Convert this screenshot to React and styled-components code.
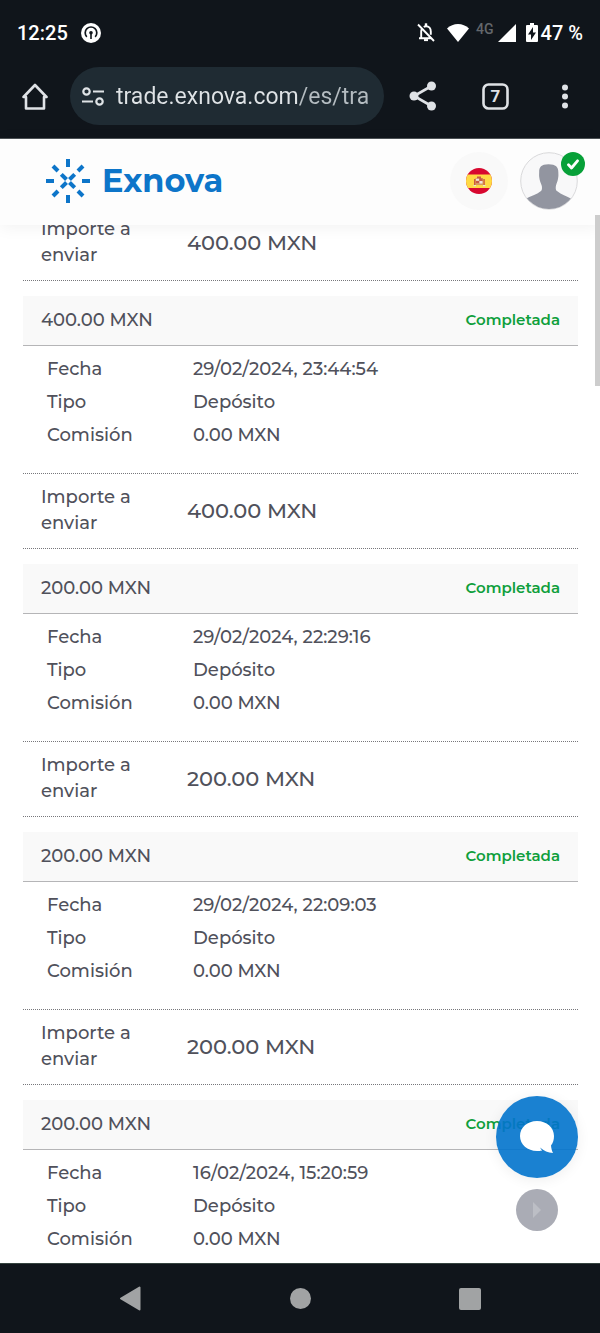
import React from "react";
import styled, { createGlobalStyle } from "styled-components";

const GlobalStyle = createGlobalStyle`
  *, *::before, *::after {
    box-sizing: border-box;
  }

  body {
    margin: 0;
    background: #fff;
    color: #50515b;
    font-family: Montserrat, Inter, "Liberation Sans", sans-serif;
  }

  button {
    padding: 0;
    border: none;
    background: none;
    cursor: pointer;
  }

  svg {
    display: block;
  }
`;

const Screen = styled.div`
  display: flex;
  flex-direction: column;
  height: 100vh;
  overflow: hidden;
`;

/* Phone status bar */

const StatusBar = styled.div`
  display: flex;
  flex: none;
  align-items: center;
  height: 67px;
  padding: 0 17px 2px;
  background: #10151b;
  color: #fff;
  font: 500 20px/24px Roboto, sans-serif;
`;

const StatusIcons = styled.div`
  display: flex;
  align-items: center;
  margin-left: auto;
`;

const StatusGap = styled.span`
  width: ${props => props.size || 12}px;
`;

const Network = styled.span`
  align-self: flex-start;
  color: #63676c;
  font-size: 14px;
  line-height: 16px;
  margin: 0 4px 0 7px;
`;

/* Browser toolbar */

const Toolbar = styled.div`
  display: flex;
  flex: none;
  align-items: center;
  height: 72px;
  padding-bottom: 13px;
  background: #10151b;
  border-bottom: 1px solid #4d5256;
`;

const ToolButton = styled.button`
  display: flex;
  flex: none;
  align-items: center;
  justify-content: center;
  width: ${props => props.$width}px;
  height: 58px;
  color: #dfe2e6;
`;

const AddressBar = styled.label`
  display: flex;
  flex: 1;
  align-items: center;
  gap: 12px;
  min-width: 0;
  height: 58px;
  padding: 0 10px 0 12px;
  border-radius: 29px;
  background: #1f2b33;
`;

const Address = styled.input`
  flex: 1;
  min-width: 0;
  padding: 2px 0 0;
  border: none;
  outline: none;
  background: linear-gradient(90deg, #dfe3e6 182px, #b4bcc1 182px);
  background-clip: text;
  -webkit-text-fill-color: transparent;
  font: 400 23px/32px Roboto, sans-serif;
`;

/* Site header */

const Header = styled.header`
  position: relative;
  z-index: 2;
  display: flex;
  flex: none;
  align-items: center;
  height: 86px;
  padding: 0 22px 2px 46px;
  background: #fdfdfd;
  box-shadow: 0 2px 16px rgba(0, 0, 0, 0.06);
`;

const Brand = styled.a`
  display: flex;
  align-items: center;
  gap: 12px;
  color: #0d75c9;
  font: 700 32px/40px Montserrat, "DejaVu Sans", sans-serif;
  text-decoration: none;
`;

const LanguageButton = styled.button`
  display: flex;
  align-items: center;
  justify-content: center;
  width: 58px;
  height: 58px;
  margin-left: auto;
  border-radius: 50%;
  background: #f9f9f9;
`;

const ProfileButton = styled.button`
  position: relative;
  width: 58px;
  height: 58px;
  margin-left: 12px;
`;

const Verified = styled.span`
  position: absolute;
  top: 0;
  right: -7px;
  display: flex;
  align-items: center;
  justify-content: center;
  width: 24px;
  height: 24px;
  border-radius: 50%;
  background: #07a038;
`;

/* Transactions */

const Main = styled.main`
  position: relative;
  flex: 1;
  min-height: 0;
  padding: 0 22px 0 23px;
  overflow: hidden;
`;

const ScrollThumb = styled.div`
  position: absolute;
  z-index: 3;
  top: 76px;
  right: 0;
  width: 5px;
  height: 171px;
  background: #cdcdcd;
`;

const Page = styled.div`
  position: relative;
  display: flex;
  flex: 1;
  flex-direction: column;
  min-height: 0;
`;

const Card = styled.article`
  margin-bottom: 15px;
`;

const CardHead = styled.div`
  display: flex;
  align-items: center;
  justify-content: space-between;
  height: 50px;
  padding: 0 18px 2px;
  border-bottom: 1px solid #b5b5b7;
  background: #f9f9f9;
  font-size: 18px;
  font-weight: 500;
`;

const Status = styled.span`
  color: #0f9f3c;
  font-size: 15px;
  font-weight: 600;
`;

const Details = styled.dl`
  display: grid;
  grid-template-columns: 146px 1fr;
  grid-auto-rows: 33px;
  align-items: center;
  height: 128px;
  margin: 0;
  padding: 6px 24px 0;
  border-bottom: 1px dotted #77777b;
  font-size: 18px;
  font-weight: 500;

  dd {
    margin: 0;
  }
`;

const Total = styled.div`
  display: grid;
  grid-template-columns: 146px 1fr;
  align-items: center;
  height: 75px;
  margin-top: ${props => (props.$scrolled ? "-19px" : 0)};
  padding: 0 18px 2px;
  border-bottom: 1px dotted #77777b;
`;

const TotalLabel = styled.span`
  width: 100px;
  font-size: 18px;
  font-weight: 500;
  line-height: 26px;
`;

const TotalAmount = styled.span`
  font-size: 21px;
  font-weight: 500;
`;

/* Floating buttons */

const FloatingButtons = styled.div`
  position: absolute;
  z-index: 4;
  right: 22px;
  bottom: 32px;
  display: flex;
  flex-direction: column;
  align-items: center;
  gap: 11px;
`;

const ChatButton = styled.button`
  display: flex;
  align-items: center;
  justify-content: center;
  width: 82px;
  height: 82px;
  border-radius: 50%;
  background: rgba(3, 117, 204, 0.91);
  box-shadow: 0 2px 14px rgba(0, 0, 0, 0.07);
`;

const NextButton = styled.button`
  display: flex;
  align-items: center;
  justify-content: center;
  width: 42px;
  height: 42px;
  border-radius: 50%;
  background: #aaacb5;
`;

/* System navigation */

const SystemNav = styled.nav`
  display: flex;
  flex: none;
  align-items: center;
  justify-content: center;
  height: 70px;
  border-top: 1px solid #35433f;
  background: #10151b;
`;

const SystemButton = styled.button`
  display: flex;
  align-items: center;
  justify-content: center;
  width: 170px;
  height: 68px;
`;

const transactions = [
  { amount: "400.00 MXN", date: "29/02/2024, 23:44:54", total: "400.00 MXN" },
  { amount: "200.00 MXN", date: "29/02/2024, 22:29:16", total: "200.00 MXN" },
  { amount: "200.00 MXN", date: "29/02/2024, 22:09:03", total: "200.00 MXN" },
  { amount: "200.00 MXN", date: "16/02/2024, 15:20:59" },
];

function PodcastIcon() {
  return (
    <svg width="20" height="20" viewBox="0 0 20 20" fill="none">
      <circle cx="10" cy="10" r="10" fill="#fff" />
      <path d="M5.800 13.800A5.800 5.800 0 1 1 14.200 13.800" stroke="#10151b" strokeWidth="1.700" />
      <circle cx="10" cy="9.800" r="1.800" fill="#10151b" />
      <path d="M10 10v6" stroke="#10151b" strokeWidth="1.600" />
    </svg>
  );
}

function MutedBellIcon() {
  return (
    <svg width="18" height="19" viewBox="0 0 18 19" fill="none" stroke="#fff" strokeWidth="1.900">
      <path d="M1 1.500L17 18M2 15.200h12.500M4.200 15V8.500c0-1 .3-2 .8-2.800M6.800 3.900C7.500 3.400 8.200 3.200 9 3.200c3 0 4.800 2.300 4.800 5.200v3.400" />
      <path d="M9 .3v2.800" strokeWidth="2.400" />
      <path d="M7 17.100h4" strokeWidth="2" />
    </svg>
  );
}

function ProfileIcon() {
  return (
    <svg width="58" height="58" viewBox="0 0 59 59">
      <defs>
        <clipPath id="avatar">
          <circle cx="29.500" cy="29.500" r="28.500" />
        </clipPath>
      </defs>
      <circle cx="29.500" cy="29.500" r="28.800" fill="#f8f8f9" stroke="#d8d8da" />
      <path
        clipPath="url(#avatar)"
        fill="#9295a0"
        d="M29 12.500c7.500 0 10 3 10 8 0 2 .3 3-.2 6-.3 3-1.500 5-2.300 8-.3 2.500-.3 4.500 1.500 5.500C42 43.500 47 45 53 48v11H5V48c6-3 12-4.500 16-8 1.500-1 1.500-3 1.200-5.500-1-3-2.200-5-2.500-8-.5-3-.2-4-.2-6 0-5 2-8 9.500-8z"
      />
    </svg>
  );
}

function SpainIcon() {
  return (
    <svg width="26" height="26" viewBox="0 0 26 26">
      <defs>
        <clipPath id="flag">
          <circle cx="13" cy="13" r="13" />
        </clipPath>
      </defs>
      <g clipPath="url(#flag)">
        <path fill="#d8082f" d="M0 0h26v26H0z" />
        <path fill="#ffda44" d="M0 6.500h26v13.500H0z" />
        <path fill="#d49a62" d="M9.500 10h7.500v7H9.500z" />
        <path fill="#c95a45" d="M8 11h1.500v7H8zM17.300 11h1.500v7h-1.500zM10 13h3v2h-3zM13.500 10.500h3v3h-3zM11 8.500h4v2h-4z" />
        <path fill="#eee3dc" d="M13.500 13h3v2.500h-3zM10 10.800h3v2h-3zM7.500 17h2.500v1.200H7.500zM17 17h2.500v1.200H17z" />
      </g>
    </svg>
  );
}

function LogoIcon() {
  return (
    <svg width="44" height="44" viewBox="-22 -22 44 44" stroke="#0d75c9" strokeWidth="4">
      {[0, 90, 180, 270].map(angle => (
        <g key={angle} transform={`rotate(${angle})`}>
          <path d="M0-22v8" />
          <path d="M10-10l5-5" />
          <path d="M1.500-1.500l5.200-5.200" />
        </g>
      ))}
    </svg>
  );
}

function TotalRow({ amount, scrolled }) {
  return (
    <Total $scrolled={scrolled}>
      <TotalLabel>Importe a enviar</TotalLabel>
      <TotalAmount>{amount}</TotalAmount>
    </Total>
  );
}

function Transaction({ amount, date, total }) {
  return (
    <Card>
      <CardHead>
        <span>{amount}</span>
        <Status>Completada</Status>
      </CardHead>
      <Details>
        <dt>Fecha</dt>
        <dd>{date}</dd>
        <dt>Tipo</dt>
        <dd>Depósito</dd>
        <dt>Comisión</dt>
        <dd>0.00 MXN</dd>
      </Details>
      {total && <TotalRow amount={total} />}
    </Card>
  );
}

export default function App() {
  return (
    <Screen>
      <GlobalStyle />
      <StatusBar>
        <span>12:25</span>
        <StatusGap size={13} />
        <PodcastIcon />
        <StatusIcons>
          <MutedBellIcon />
          <StatusGap size={12} />
          <svg width="22" height="18" viewBox="0 0 22 18" fill="#fff">
            <path d="M0 4.500C6-1.500 16-1.500 22 4.500L11 18z" />
          </svg>
          <Network>4G</Network>
          <svg width="18" height="18" viewBox="0 0 18 18" fill="#fff">
            <path d="M18 0v18H0z" />
          </svg>
          <StatusGap size={10} />
          <svg width="12" height="19" viewBox="0 0 12 19" fill="#fff">
            <path d="M4 0h4v2h3q1 0 1 1v15q0 1-1 1H1q-1 0-1-1V3q0-1 1-1h3z" />
            <path fill="#10151b" d="M7 4L2 11.500h3V17l5-7.500H7z" />
          </svg>
          <StatusGap size={3} />
          <span>47 %</span>
        </StatusIcons>
      </StatusBar>

      <Toolbar>
        <ToolButton $width={70} aria-label="Inicio">
          <svg width="26" height="27" viewBox="0 0 26 27" fill="none" stroke="currentColor" strokeWidth="2.600" strokeLinejoin="round">
            <path d="M1.500 14L13 2l11.500 12H22v11.500H4V14z" />
          </svg>
        </ToolButton>
        <AddressBar>
          <svg width="22" height="19" viewBox="0 0 22 19" fill="none" stroke="#dfe3e6" strokeWidth="2.200">
            <circle cx="4.500" cy="4.500" r="3.200" />
            <circle cx="17.500" cy="14.500" r="3.200" />
            <path d="M11 4.500h11M0 14.500h11" />
          </svg>
          <Address aria-label="Dirección" defaultValue="trade.exnova.com/es/tra" />
        </AddressBar>
        <ToolButton $width={78} aria-label="Compartir">
          <svg width="28" height="30" viewBox="0 0 28 30" fill="currentColor">
            <path d="M22.500 5L5 15l17.500 10" fill="none" stroke="currentColor" strokeWidth="2.600" />
            <circle cx="22.500" cy="5" r="4.500" />
            <circle cx="5" cy="15" r="4.500" />
            <circle cx="22.500" cy="25" r="4.500" />
          </svg>
        </ToolButton>
        <ToolButton $width={67} aria-label="Pestañas">
          <svg width="27" height="27" viewBox="0 0 27 27">
            <rect x="1.500" y="1.500" width="24" height="24" rx="5" fill="none" stroke="currentColor" strokeWidth="2.600" />
            <text x="13.500" y="19" fill="currentColor" fontFamily="Roboto, sans-serif" fontSize="17" fontWeight="700" textAnchor="middle">7</text>
          </svg>
        </ToolButton>
        <ToolButton $width={71} aria-label="Menú">
          <svg width="6" height="25" viewBox="0 0 6 25" fill="currentColor">
            <circle cx="3" cy="3.500" r="3" />
            <circle cx="3" cy="12.500" r="3" />
            <circle cx="3" cy="21.500" r="3" />
          </svg>
        </ToolButton>
      </Toolbar>

      <Page>
        <Header>
          <Brand href="#">
            <LogoIcon />
            Exnova
          </Brand>
          <LanguageButton aria-label="Español">
            <SpainIcon />
          </LanguageButton>
          <ProfileButton aria-label="Perfil">
            <ProfileIcon />
            <Verified>
              <svg width="12" height="11" viewBox="0 0 12 11" fill="none" stroke="#fff" strokeWidth="2.800" strokeLinecap="round" strokeLinejoin="round">
                <path d="M1.500 5.800L4.500 9L10.500 1.800" />
              </svg>
            </Verified>
          </ProfileButton>
        </Header>
        <ScrollThumb />
        <Main>
          <Card>
            <TotalRow amount="400.00 MXN" scrolled />
          </Card>
          {transactions.map(item => (
            <Transaction key={item.date} {...item} />
          ))}
        </Main>
        <FloatingButtons>
          <ChatButton aria-label="Chat">
            <svg width="34" height="33" viewBox="0 0 34 33" fill="#fff">
              <path d="M17 0c9.500 0 17 6.500 17 15 0 4-1 7-3 9.500.3 3 1 5.500 2 7.500-5-.5-9-2-13-5.500.7 1.200 1.200 2 2.200 3C20 30 18.500 30 17 30 7.500 30 0 23.500 0 15S7.500 0 17 0z" />
            </svg>
          </ChatButton>
          <NextButton aria-label="Siguiente">
            <svg width="10" height="16" viewBox="0 0 10 16" fill="#bcbec5">
              <path d="M1 0v16l8-8z" />
            </svg>
          </NextButton>
        </FloatingButtons>
      </Page>

      <SystemNav>
        <SystemButton aria-label="Atrás">
          <svg width="22" height="25" viewBox="0 0 22 25" fill="#a1a3a4" stroke="#a1a3a4" strokeWidth="2" strokeLinejoin="round">
            <path d="M20.500 1.500v22L2 12.500z" />
          </svg>
        </SystemButton>
        <SystemButton aria-label="Pantalla de inicio">
          <svg width="21" height="21" viewBox="0 0 21 21" fill="#a1a3a4">
            <circle cx="10.500" cy="10.500" r="10.500" />
          </svg>
        </SystemButton>
        <SystemButton aria-label="Recientes">
          <svg width="22" height="22" viewBox="0 0 22 22" fill="#a1a3a4">
            <rect width="22" height="22" rx="2" />
          </svg>
        </SystemButton>
      </SystemNav>
    </Screen>
  );
}
